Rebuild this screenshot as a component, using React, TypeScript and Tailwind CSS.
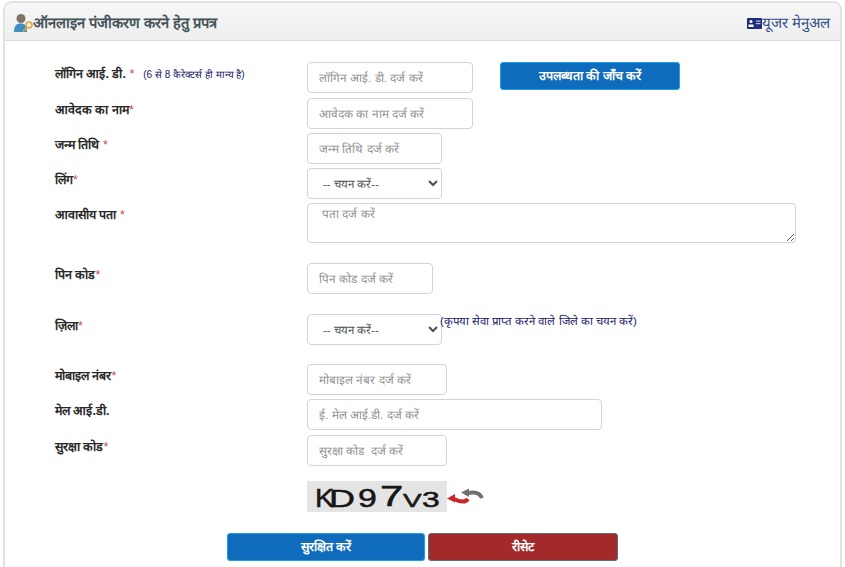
import { ReactNode } from "react";

const inputCls =
  "h-[31px] rounded-[4px] border border-[#ced4da] bg-white px-[11px] text-[11.8px] text-[#495057] placeholder:text-[#8f8f8f] outline-none";
const selectCls =
  "h-[31px] w-[135px] rounded-[4px] border border-[#ced4da] bg-white pl-[11px] text-[11.5px] text-[#495057] outline-none";

function Star() {
  return <span className="font-normal text-[#c0504d]">*</span>;
}

function Row({ label, className, children }: { label: ReactNode; className: string; children: ReactNode }) {
  return (
    <div className={`flex items-start ${className}`}>
      <label className="w-[252px] shrink-0 pt-[3px] text-[12.5px] leading-[18px] font-bold text-[#2a2a2a]">{label}</label>
      {children}
    </div>
  );
}

function Refresh() {
  return (
    <svg width="37" height="18" viewBox="0 0 37 18" fill="none">
      <path d="M21 11 C18 15 13 14 7 11" stroke="#c62828" strokeWidth="4" />
      <path d="M0 10.5 L8 6 L8 14.5 Z" fill="#c62828" />
      <path d="M35 10 C33 5 28 3.5 21 5" stroke="#6f6f6f" strokeWidth="4" />
      <path d="M14 4.5 L22 0.5 L22 9 Z" fill="#6f6f6f" />
    </svg>
  );
}

export default function App() {
  return (
    <div className="h-[567px] w-[845px] overflow-hidden bg-white font-['Liberation_Sans',sans-serif]">
      <div className="mx-[3px] mt-[1px] h-[600px] rounded-t-[9px] border-x-2 border-t-2 border-[#e2e2e2] bg-white">
        <div className="flex h-[38px] items-center justify-between rounded-t-[8px] border-b border-[#dcdcdc] bg-gradient-to-b from-[#f7f7f7] to-[#eeeeee] pt-[3px] pr-[10px] pl-[9px]">
          <div className="flex items-center">
            <svg width="19" height="20" viewBox="0 0 19 20">
              <circle cx="7" cy="5.5" r="4.5" fill="#7d7468" />
              <path d="M0 19 C0 12 3 10.5 7 10.5 C11 10.5 13 13 13 19 Z" fill="#3f8fc4" />
              <circle cx="15" cy="12" r="3" fill="none" stroke="#e0a83a" strokeWidth="1.6" />
              <path d="M13 14 L9 18.5" stroke="#e0a83a" strokeWidth="1.6" />
            </svg>
            <span className="text-[14.7px] font-bold text-[#46555a]">ऑनलाइन पंजीकरण करने हेतु प्रपत्र</span>
          </div>
          <a className="flex items-center text-[15px] text-[#34508a]">
            <svg width="15" height="11" viewBox="0 0 15 11">
              <rect width="15" height="11" rx="1" fill="#1f2f7a" />
              <circle cx="4" cy="3.5" r="1.5" fill="#fff" />
              <rect x="1.5" y="6.5" width="5" height="2.5" fill="#fff" />
              <rect x="9" y="2.5" width="4.5" height="1.2" fill="#b9c0dd" />
              <rect x="9" y="5" width="4.5" height="1.2" fill="#b9c0dd" />
            </svg>
            यूजर मेनुअल
          </a>
        </div>

        <form className="pl-[50px]">
          <Row label={<>लॉगिन आई. डी. <Star /><span className="ml-[9px] text-[10px] font-normal text-[#1a1a6e]">(6 से 8 कैरेक्टर्स ही मान्य है)</span></>} className="mt-[21px]">
            <input className={`${inputCls} w-[166px]`} placeholder="लॉगिन आई. डी. दर्ज करें" />
            <button type="button" className="ml-[27px] h-[28px] w-[180px] rounded-[3px] border border-[#1ea0e8] bg-[#0f6bbb] text-[12.5px] font-bold text-white">
              उपलब्धता की जाँच करें
            </button>
          </Row>
          <Row label={<>आवेदक का नाम<Star /></>} className="mt-[5px]">
            <input className={`${inputCls} w-[166px]`} placeholder="आवेदक का नाम दर्ज करें" />
          </Row>
          <Row label={<>जन्म तिथि <Star /></>} className="mt-[4px]">
            <input className={`${inputCls} w-[135px]`} placeholder="जन्म तिथि दर्ज करें" />
          </Row>
          <Row label={<>लिंग<Star /></>} className="mt-[4px]">
            <select className={selectCls}><option>-- चयन करें--</option></select>
          </Row>
          <Row label={<>आवासीय पता <Star /></>} className="mt-[4px]">
            <textarea className="h-[40px] w-[489px] rounded-[4px] border border-[#ced4da] bg-white px-[14px] py-[2px] text-[11.8px] placeholder:text-[#8f8f8f] outline-none" placeholder="पता दर्ज करें" />
          </Row>
          <Row label={<>पिन कोड<Star /></>} className="mt-[20px]">
            <input className={`${inputCls} w-[126px]`} placeholder="पिन कोड दर्ज करें" />
          </Row>
          <Row label={<>ज़िला<Star /></>} className="mt-[20px]">
            <select className={selectCls}><option>-- चयन करें--</option></select>
            <span className="-ml-[2px] text-[11.4px] leading-[14px] text-[#1a1a6e]">(कृपया सेवा प्राप्त करने वाले जिले का चयन करें)</span>
          </Row>
          <Row label={<>मोबाइल नंबर<Star /></>} className="mt-[19px]">
            <input className={`${inputCls} w-[140px]`} placeholder="मोबाइल नंबर दर्ज करें" />
          </Row>
          <Row label="मेल आई.डी." className="mt-[4px]">
            <input className={`${inputCls} w-[295px]`} placeholder="ई. मेल आई.डी. दर्ज करें" />
          </Row>
          <Row label={<>सुरक्षा कोड<Star /></>} className="mt-[5px]">
            <input className={`${inputCls} w-[140px]`} placeholder="सुरक्षा कोड  दर्ज करें" />
          </Row>
          <div className="mt-[15px] ml-[252px] flex items-center">
            <div className="flex h-[31px] w-[140px] items-baseline bg-[#e4e4e4] pt-[1px] pl-[8px] text-[#161616] [-webkit-text-stroke:0.5px_#161616]">
              <span className="inline-block w-[14px] origin-left scale-x-[1.1] text-[26px] leading-none">K</span>
              <span className="inline-block w-[29px] origin-left scale-x-[1.5] text-[24px] leading-none">D</span>
              <span className="inline-block w-[22px] origin-left scale-x-[1.3] text-[26px] leading-none">9</span>
              <span className="inline-block w-[23px] origin-left -translate-y-[1px] scale-x-[1.4] text-[30px] leading-none">7</span>
              <span className="inline-block w-[19px] origin-left scale-x-[1.55] text-[18px] leading-none">V</span>
              <span className="inline-block w-[18px] origin-left scale-x-[1.45] text-[22px] leading-none">3</span>
            </div>
            <Refresh />
          </div>
          <div className="mt-[21px] ml-[172px] flex gap-[3px]">
            <button type="button" className="h-[28px] w-[198px] rounded-[3px] border border-[#1ea0e8] bg-[#0f6bbb] text-[12.5px] font-bold text-white">
              सुरक्षित करें
            </button>
            <button type="button" className="h-[28px] w-[190px] rounded-[3px] border border-[#5b6b80] bg-[#a32a2a] text-[12.5px] font-bold text-white">
              रीसेट
            </button>
          </div>
        </form>
      </div>
    </div>
  );
}
